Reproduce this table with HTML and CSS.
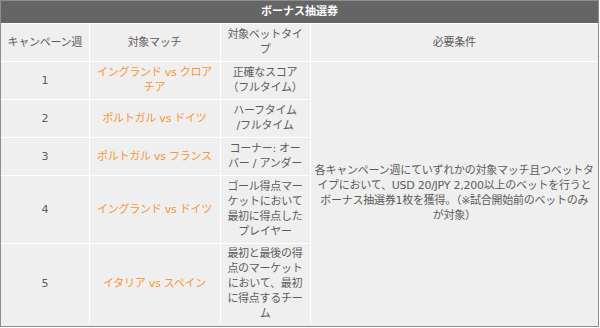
FILE: index.html
```html
<!DOCTYPE html>
<html lang="ja">
<head>
<meta charset="utf-8">
<title>ボーナス抽選券</title>
<link rel="stylesheet" href="styles.css">
</head>
<body>
<div class="panel">
  <table class="bonus">
    <colgroup>
      <col class="c-week">
      <col class="c-match">
      <col class="c-type">
      <col class="c-cond">
    </colgroup>
    <thead>
      <tr class="title-row"><th colspan="4" class="title">ボーナス抽選券</th></tr>
      <tr class="heads">
        <th>キャンペーン週</th>
        <th>対象マッチ</th>
        <th>対象ベットタイ<br>プ</th>
        <th>必要条件</th>
      </tr>
    </thead>
    <tbody>
      <tr class="r2">
        <td>1</td>
        <td class="match">イングランド vs クロア<br>チア</td>
        <td>正確なスコア<br>（フルタイム）</td>
        <td rowspan="5" class="cond">各キャンペーン週にていずれかの対象マッチ且つベットタ<br>イプにおいて、USD 20/JPY 2,200以上のベットを行うと<br>ボーナス抽選券1枚を獲得。（※試合開始前のベットのみ<br>が対象）</td>
      </tr>
      <tr class="r2">
        <td>2</td>
        <td class="match">ポルトガル vs ドイツ</td>
        <td>ハーフタイム<br>/フルタイム</td>
      </tr>
      <tr class="r2">
        <td>3</td>
        <td class="match">ポルトガル vs フランス</td>
        <td>コーナー: オー<br>バー / アンダー</td>
      </tr>
      <tr class="r4">
        <td>4</td>
        <td class="match">イングランド vs ドイツ</td>
        <td>ゴール得点マー<br>ケットにおいて<br>最初に得点した<br>プレイヤー</td>
      </tr>
      <tr class="r5">
        <td>5</td>
        <td class="match">イタリア vs スペイン</td>
        <td>最初と最後の得<br>点のマーケット<br>において、最初<br>に得点するチー<br>ム</td>
      </tr>
    </tbody>
  </table>
</div>
</body>
</html>
```

FILE: styles.css
```css
html, body {
  margin: 0;
  padding: 0;
  background: #ffffff;
}

.panel {
  width: 599px;
  height: 327px;
  box-sizing: border-box;
  border: 1px solid #8e8e8e;
  background: #efefef;
  overflow: hidden;
}

.bonus {
  width: 597px;
  border-collapse: collapse;
  table-layout: fixed;
  border-style: hidden;
  font-family: "DejaVu Sans", "Noto Sans CJK JP", sans-serif;
  font-size: 11px;
  line-height: 15px;
  letter-spacing: -0.25px;
  color: #5c5c5c;
}

.c-week { width: 88px; }
.c-match { width: 131px; }
.c-type { width: 90px; }
.c-cond { width: 288px; }

.bonus th,
.bonus td {
  border: 1px solid #ffffff;
  padding: 2px 1px;
  text-align: center;
  vertical-align: middle;
  font-weight: normal;
}

.title-row { height: 22px; }

.bonus .title {
  background: #656565;
  color: #ffffff;
  font-weight: bold;
  letter-spacing: 0;
  border-top: 1px solid #777777;
}

.heads { height: 38px; }
.r2 { height: 38px; }
.r4 { height: 68px; }
.r5 { height: 81px; }

.match {
  color: #f5963a;
}
```
